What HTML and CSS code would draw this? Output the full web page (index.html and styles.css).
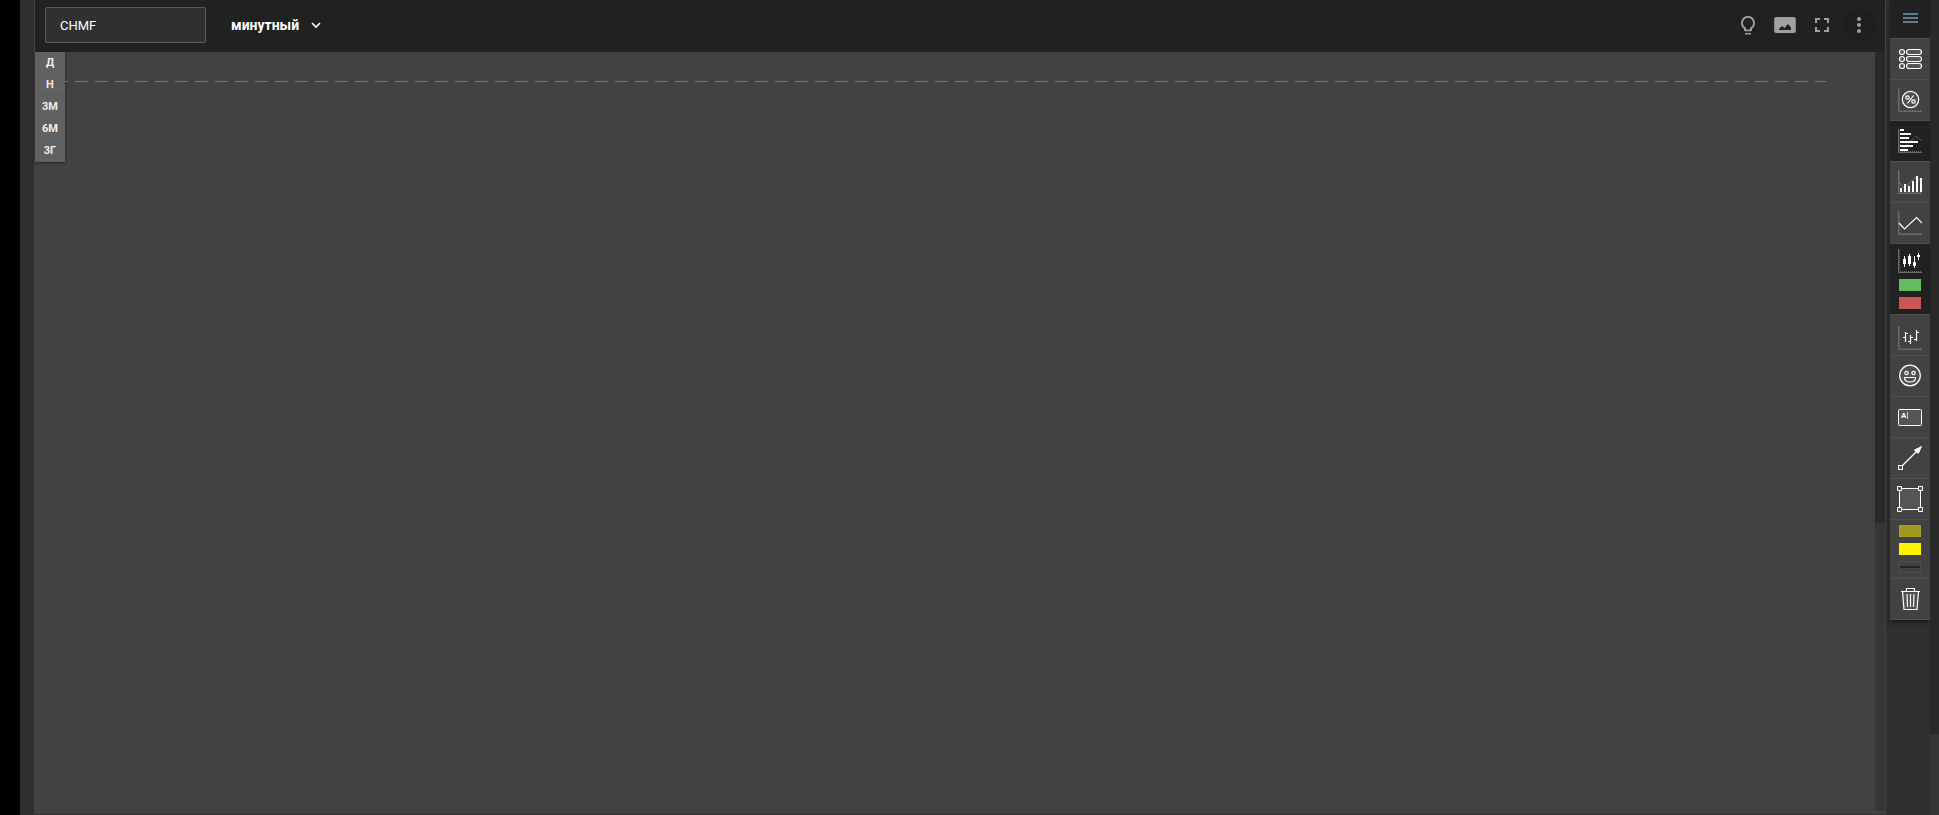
FILE: index.html
```
<!DOCTYPE html>
<html lang="ru">
<head>
    <meta charset="UTF-8">
    <meta name="viewport" content="width=device-width, initial-scale=1.0">
    <title>CHMF</title>
    <link rel="stylesheet" href="styles.css">
</head>
<body>
    <!-- общие оси для иконок графиков -->
    <svg class="defs" width="0" height="0">
        <defs>
            <g id="axes" fill="none" stroke="#6b6b6b" stroke-width="1">
                <path d="M.5 0v23.500H24"/>
                <path d="M1.500 1v21M2 22.500h22" stroke-dasharray="1 1"/>
            </g>
        </defs>
    </svg>

    <div class="page">
        <main class="workspace">
            <header class="topbar">
                <input class="ticker" type="text" value="CHMF" aria-label="Тикер">
                <button class="interval" type="button">
                    <span>минутный</span>
                    <svg width="10" height="7" viewBox="0 0 10 7"><path d="M1 1l4 4 4-4" fill="none" stroke="#fff" stroke-width="1.600"/></svg>
                </button>
                <div class="actions">
                    <button class="action" type="button" aria-label="Идеи">
                        <svg width="24" height="24" viewBox="0 0 24 24"><path d="M9 20h6v1.500H9zM12 3a7 7 0 0 0-4 12.700V17a1.300 1.300 0 0 0 1.300 1.300h5.400A1.300 1.300 0 0 0 16 17v-1.300A7 7 0 0 0 12 3zm2.800 11.200l-.8.600v1.700h-4v-1.700l-.8-.600a5.100 5.100 0 1 1 5.600 0z"/></svg>
                    </button>
                    <button class="action" type="button" aria-label="Снимок">
                        <svg width="24" height="24" viewBox="0 0 24 24"><path fill-rule="evenodd" d="M3 4h18a1.800 1.800 0 0 1 1.800 1.800v12.400A1.800 1.800 0 0 1 21 20H3a1.800 1.800 0 0 1-1.800-1.800V5.800A1.800 1.800 0 0 1 3 4zm3 13h12v-2.500L15 11l-3.500 4L9 13l-3 3z"/></svg>
                    </button>
                    <button class="action" type="button" aria-label="На весь экран">
                        <svg width="24" height="24" viewBox="0 0 24 24"><path d="M7 14H5v5h5v-2H7v-3zm-2-4h2V7h3V5H5v5zm12 7h-3v2h5v-5h-2v3zM14 5v2h3v3h2V5h-5z"/></svg>
                    </button>
                    <button class="action action-round" type="button" aria-label="Меню">
                        <svg width="24" height="24" viewBox="0 0 24 24"><circle cx="12" cy="6" r="2"/><circle cx="12" cy="12" r="2"/><circle cx="12" cy="18" r="2"/></svg>
                    </button>
                </div>
            </header>
            <div class="chart-area">
                <section class="chart">
                    <nav class="periods">
                        <button type="button">Д</button>
                        <button type="button">Н</button>
                        <button type="button">3М</button>
                        <button type="button">6М</button>
                        <button type="button">3Г</button>
                    </nav>
                    <div class="price-line"></div>
                </section>
                <div class="scroll chart-scroll"><div class="thumb"></div></div>
            </div>
        </main>

        <aside class="side">
            <div class="tools">
                <button class="tool tool-menu active" type="button" aria-label="Свернуть">
                    <svg width="24" height="24" viewBox="0 0 24 24"><path d="M5 7h15M5 11h15M5 15h15" stroke="#607d8b" stroke-width="2"/></svg>
                </button>
                <button class="tool" type="button" aria-label="Список">
                    <svg class="line" width="24" height="24" viewBox="0 0 24 24"><g fill="#555"><circle cx="4" cy="5" r="2.500"/><rect x="8.500" y="2.500" width="15" height="5" rx="2.500"/><circle cx="4" cy="12" r="2.500"/><rect x="8.500" y="9.500" width="15" height="5" rx="2.500"/><circle cx="4" cy="19" r="2.500"/><rect x="8.500" y="16.500" width="15" height="5" rx="2.500"/></g></svg>
                </button>
                <button class="tool" type="button" aria-label="Проценты">
                    <svg class="line" width="24" height="24" viewBox="0 0 24 24"><use href="#axes"/><circle cx="12.500" cy="11.500" r="8.200" fill="#505050"/><path d="M15.500 7.500l-6 8"/><circle cx="9.500" cy="9.500" r="1.700"/><circle cx="15.500" cy="13.500" r="1.700"/></svg>
                </button>
                <button class="tool active" type="button" aria-label="Горизонтальные объёмы">
                    <svg width="24" height="24" viewBox="0 0 24 24"><use href="#axes"/><path d="M2 15l4 4L18 7l6 5" fill="none" stroke="#555"/><path d="M2 0h4v2H2zM2 4h11v2H2zM2 8h9v2H2zM2 12h18v2H2zM2 16h13v2H2zM2 20h8v2H2z" fill="#fff"/></svg>
                </button>
                <button class="tool" type="button" aria-label="Объёмы">
                    <svg width="24" height="24" viewBox="0 0 24 24"><use href="#axes"/><path d="M1 12l5 6L18 7l6 5" fill="none" stroke="#777"/><path d="M2 18h2v4H2zM6 14h2v8H6zM10 16h2v6h-2zM14 11h2v11h-2zM18 6h2v16h-2zM22 8h2v14h-2z" fill="#fff"/></svg>
                </button>
                <button class="tool" type="button" aria-label="Линия">
                    <svg class="line" width="24" height="24" viewBox="0 0 24 24"><use href="#axes"/><path d="M1 12l5.500 6L18.500 6.500 24 12"/></svg>
                </button>
                <div class="tool-group active">
                    <button class="tool-inner" type="button" aria-label="Свечи">
                        <svg width="24" height="24" viewBox="0 0 24 24"><use href="#axes"/><path d="M6 7h1v3h1v5H7v3H6v-3H5v-5h1zM11 5h1v2h1v8h-1v2h-1v-2h-1V7h1zM16 7h1v6h1v4h-1v2h-1v-2h-1v-4h1zM20 4h1v2h1v2h-1v3h-1V8h-1V6h1z" fill="#fff"/></svg>
                    </button>
                    <button class="swatch up" type="button" aria-label="Цвет роста"></button>
                    <button class="swatch down" type="button" aria-label="Цвет падения"></button>
                </div>
                <button class="tool" type="button" aria-label="Бары">
                    <svg class="line" width="24" height="30" viewBox="0 -6 24 30"><use href="#axes"/><path d="M7.500 6v10M5 11.500h2.500M7.500 7.500H10M12.500 9v9M10 15.500h2.500M12.500 11.500H15M18.500 4v11M16 13.500h2.500M18.500 6.500H21"/></svg>
                </button>
                <button class="tool" type="button" aria-label="Смайлы">
                    <svg class="line" width="24" height="24" viewBox="0 0 24 24"><circle cx="12" cy="11.500" r="10.300" fill="#505050"/><circle cx="8.500" cy="9" r="1.700"/><circle cx="15.500" cy="9" r="1.700"/><path d="M6.500 13.500h11c0 3-2.500 4.500-5.500 4.500s-5.500-1.500-5.500-4.500z"/></svg>
                </button>
                <button class="tool" type="button" aria-label="Текст">
                    <svg width="24" height="24" viewBox="0 0 24 24"><rect x=".5" y="4.500" width="23" height="16" rx="1" fill="#555" stroke="#fff"/><text x="3" y="13" class="glyph">A</text><path d="M9.500 7v7" stroke="#ccc"/></svg>
                </button>
                <button class="tool" type="button" aria-label="Стрелка">
                    <svg width="24" height="24" viewBox="0 0 24 24"><path d="M4 20L19 5" stroke="#fff" stroke-width="1.300"/><path d="M24 0l-3 7-2.500-1.500L16 4z" fill="#fff"/><path d="M24 0l-4 8-4-4z" fill="#fff"/><rect x=".5" y="19.500" width="4" height="4" fill="#555" stroke="#fff"/></svg>
                </button>
                <button class="tool" type="button" aria-label="Прямоугольник">
                    <svg width="26" height="26" viewBox="0 0 26 26"><g fill="#555" stroke="#fff"><path d="M2.500 2.500h21v21h-21z"/><path d="M.5.5h4v4h-4zM21.500.5h4v4h-4zM.5 21.500h4v4h-4zM21.500 21.500h4v4h-4z"/></g></svg>
                </button>
                <div class="tool-group">
                    <button class="swatch fill" type="button" aria-label="Заливка"></button>
                    <button class="swatch border" type="button" aria-label="Обводка"></button>
                    <button class="swatch weight" type="button" aria-label="Толщина линии"><span></span></button>
                </div>
                <button class="tool" type="button" aria-label="Удалить">
                    <svg class="line" width="24" height="24" viewBox="0 0 24 24"><path d="M4.500 4.500l1.500 18h13l1.500-18z" fill="#505050"/><path d="M3 4.500h19M8.500 4V1.500h8V4M9 7l.5 13M12.500 7v13M16 7l-.5 13"/></svg>
                </button>
            </div>
        </aside>
        <div class="scroll page-scroll"><div class="thumb"></div></div>
    </div>
</body>
</html>
```
FILE: styles.css
```
* {
    box-sizing: border-box;
}
body {
    margin: 0;
    background: #000;
    color: #fff;
    font-family: Roboto, Arial, sans-serif;
    font-size: 13px;
}
button {
    margin: 0;
    padding: 0;
    border: none;
    background: none;
    color: inherit;
    font: inherit;
    cursor: pointer;
}
svg {
    display: block;
}
.defs {
    position: absolute;
}
.page {
    display: flex;
    height: 100vh;
    margin-left: 20px;
    padding-left: 14px;
    background: #303030;
}
.workspace {
    flex: 1;
    display: flex;
    flex-direction: column;
    border-left: 1px solid #424242;
    border-right: 1px solid #424242;
    border-bottom: 1px solid #303030;
    background: #424242;
}

/* верхняя панель */
.topbar {
    display: flex;
    align-items: center;
    padding: 7px 10px 9px;
    background: #212121;
}
.ticker {
    width: 161px;
    height: 36px;
    padding: 0 14px;
    border: 1px solid #5a5a5a;
    border-radius: 2px;
    background: #303030;
    color: #fff;
    font: inherit;
}
.interval {
    display: flex;
    align-items: center;
    gap: 12px;
    margin-left: 25px;
    font-size: 14px;
    font-weight: bold;
}
.actions {
    display: flex;
    gap: 5px;
    margin-left: auto;
}
.action {
    display: flex;
    align-items: center;
    justify-content: center;
    width: 32px;
    height: 32px;
}
.action svg {
    fill: #a0a0a0;
}
.action-round {
    border-radius: 50%;
    background: #1e1e1e;
}

/* график */
.chart-area {
    flex: 1;
    display: flex;
}
.chart {
    flex: 1;
    display: flex;
    align-items: flex-start;
}
.periods {
    display: flex;
    flex-direction: column;
    width: 30px;
    background: #616161;
    box-shadow: 0 1px 3px rgba(0, 0, 0, 0.5);
}
.periods button {
    height: 22px;
    padding-bottom: 1px;
    border-bottom: 1px solid #5b5b5b;
    color: #eee;
    font-size: 11px;
    font-weight: bold;
}
.price-line {
    flex: 1;
    height: 1px;
    margin: 29px 49px 0 0;
    background: repeating-linear-gradient(90deg, #607d8b 0 3px, transparent 3px 10px, #607d8b 10px 20px);
}
.scroll {
    background: #363636;
}
.scroll .thumb {
    background: #292929;
}
.chart-scroll {
    width: 10px;
    margin-bottom: 3px;
}
.chart-scroll .thumb {
    height: 62%;
}
.page-scroll {
    width: 9px;
}
.page-scroll .thumb {
    height: 90%;
}

/* инструменты */
.side {
    padding-left: 4px;
}
.tools {
    width: 40px;
    background: #424242;
    box-shadow: 0 2px 5px rgba(0, 0, 0, 0.5);
}
.tool {
    display: flex;
    align-items: center;
    justify-content: center;
    width: 100%;
    height: 41px;
    border-bottom: 1px solid #505050;
}
.tool-menu {
    height: 39px;
}
.tool-group {
    display: flex;
    flex-direction: column;
    align-items: center;
    gap: 6px;
    padding: 5px 0;
    border-bottom: 1px solid #505050;
}
.active {
    background: #212121;
}
.line {
    fill: none;
    stroke: #fff;
    stroke-width: 1.2;
}
.glyph {
    fill: #fff;
    font-size: 8px;
    font-weight: bold;
}
.swatch {
    width: 22px;
    height: 12px;
}
.up {
    background: #66bb60;
}
.down {
    background: #cb5656;
}
.fill {
    border: 1px solid #a9a02a;
    background: #a09820;
}
.border {
    background: #fff200;
}
.weight {
    display: flex;
    align-items: center;
    border: 1px solid #4d4d4d;
}
.weight span {
    width: 100%;
    height: 2px;
    background: #212529;
}
```
